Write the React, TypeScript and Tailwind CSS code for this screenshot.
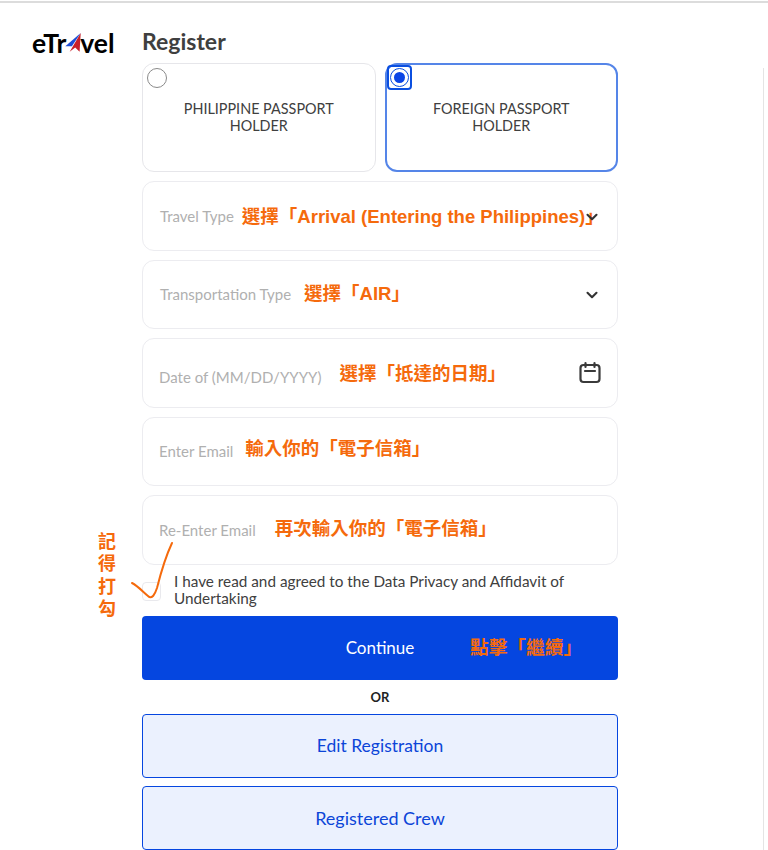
import { ChevronDown } from 'lucide-react';

const noteFont = "font-['Liberation_Sans','Noto_Sans_CJK_TC',sans-serif]";

function Field({ label, note, noteGap, labelClass = '', children }: { label: string; note: string; noteGap: string; labelClass?: string; children?: React.ReactNode }) {
  return (
    <div className="h-[69.5px] border border-[#ececf0] rounded-xl flex items-center pl-4 pr-4 relative">
      <span className={`${labelClass} text-[15px] text-[#b0b0b0] whitespace-nowrap`}>{label}</span>
      <span className={`${noteFont} ${noteGap} text-[18.5px] font-bold text-[#f56a0c] whitespace-nowrap`}>{note}</span>
      {children}
    </div>
  );
}

export default function App() {
  return (
    <div className="w-[768px] h-[850px] overflow-hidden bg-white relative font-['Lato',sans-serif]">
      {/* Top edge + scrollbar line */}
      <div className="h-[3px] border-b-2 border-[#dcdcdc]" />
      <div className="absolute right-[4px] top-[68px] bottom-0 w-px bg-[#e4e4e4]" />

      <div className="flex pl-8 pt-[25px]">
        {/* Logo */}
        <div className="w-[110px] shrink-0 pt-[2px]">
          <div className="flex items-center text-[26.5px] leading-[26px] font-bold text-black">
            <span>eTr</span>
            <svg width="18" height="22" viewBox="0 0 16 20" className="-mx-[2px]">
              <path d="M1 13 L15 1 L7 13 Z" fill="#1d4ed8" />
              <path d="M15 1 L14 18 L10 14 L5 18 Z" fill="#c8202a" />
            </svg>
            <span>vel</span>
          </div>
        </div>

        {/* Main column */}
        <div className="w-[476px]">
          <h1 className="text-[23px] leading-[26px] font-bold text-[#3f3f3f] mb-[9px]">Register</h1>

          <div className="grid grid-cols-2 gap-[9px]">
            <div className="h-[109px] border border-[#e6e6ea] rounded-xl relative flex items-center justify-center text-center text-[14.4px] leading-[17px] text-[#404040]">
              <span className="absolute left-[4px] top-[4px] w-5 h-5 rounded-full border border-[#8a8a8a]" />
              <span className="mt-[-1px]">PHILIPPINE PASSPORT<br />HOLDER</span>
            </div>
            <div className="h-[109px] border-2 border-[#5585e8] rounded-xl relative flex items-center justify-center text-center text-[14.4px] leading-[17px] text-[#404040]">
              <span className="absolute left-0 top-0 w-[25px] h-[25px] rounded-[4px] border-2 border-[#0b4fe0] flex items-center justify-center">
                <span className="w-[19px] h-[19px] rounded-full border border-[#0b4fe0] flex items-center justify-center">
                  <span className="w-[11px] h-[11px] rounded-full bg-[#0b45e6]" />
                </span>
              </span>
              <span className="mt-[-1px]">FOREIGN PASSPORT<br />HOLDER</span>
            </div>
          </div>

          <div className="mt-[9px] flex flex-col gap-[9px]">
            <Field label="Travel Type" note="選擇「Arrival (Entering the Philippines)」" noteGap="ml-[8px] mt-[2px]" labelClass="ml-[1px]">
              <ChevronDown className="absolute right-[16px] top-[26px] w-[18px] h-[18px] text-[#333]" strokeWidth={2.8} />
            </Field>
            <Field label="Transportation Type" note="選擇「AIR」" noteGap="ml-[13px]" labelClass="ml-[1px]">
              <ChevronDown className="absolute right-[16px] top-[25px] w-[18px] h-[18px] text-[#333]" strokeWidth={2.8} />
            </Field>
            <Field label="Date of (MM/DD/YYYY)" note="選擇「抵達的日期」" noteGap="ml-[18px] mt-[3px]" labelClass="mt-[8px]">
              <svg width="24" height="24" viewBox="0 0 24 24" fill="none" stroke="#3a3a3a" strokeWidth="2.2" strokeLinecap="round" className="absolute right-[15px] top-[22px]">
                <rect x="2.5" y="4" width="19" height="17" rx="3" />
                <path d="M7.5 2v4M16.5 2v4M7 10h10" />
              </svg>
            </Field>
            <Field label="Enter Email" note="輸入你的「電子信箱」" noteGap="ml-[12px] mb-[5px]" />
            <Field label="Re-Enter Email" note="再次輸入你的「電子信箱」" noteGap="ml-[19px] mb-[1px]" />
          </div>

          {/* Agreement */}
          <div className="mt-[8px] flex items-center h-[35px]">
            <span className="w-[19px] h-[19px] border border-[#e9e9ed] rounded-[4px] shrink-0 mt-[2px]" />
            <p className="ml-[13px] text-[15.3px] leading-[17px] text-[#404040]">I have read and agreed to the Data Privacy and Affidavit of Undertaking</p>
          </div>

          <button className="mt-[8px] w-full h-[64px] rounded-[4px] bg-[#0546e0] flex items-center justify-center text-[17px] text-white relative">
            Continue
            <span className={`${noteFont} absolute left-[328px] top-[21px] text-[18.7px] leading-[22px] font-bold text-[#f56a0c]`}>點擊「繼續」</span>
          </button>

          <div className="h-[34px] pt-[3px] flex items-center justify-center text-[13px] font-bold text-[#222]">OR</div>

          <div className="flex flex-col gap-[8px]">
            <button className="w-full h-[64px] pt-[2px] rounded-[4px] border border-[#0546e0] bg-[#ebf1fe] text-[17.5px] text-[#0b45d8]">Edit Registration</button>
            <button className="w-full h-[64px] pt-[2px] rounded-[4px] border border-[#0546e0] bg-[#ebf1fe] text-[18px] text-[#0b45d8]">Registered Crew</button>
          </div>
        </div>
      </div>

      {/* Hand-written annotation */}
      <div className={`${noteFont} absolute left-[98px] top-[531px] w-[18px] text-[18px] leading-[22.4px] font-bold text-[#f56a0c]`}>記得打勾</div>
      <svg width="50" height="90" viewBox="0 0 50 90" fill="none" className="absolute left-[128px] top-[538px]">
        <path d="M4 45 C10 48 15 54 20 58 C24 62 27 56 29 50 C32 38 37 20 44 5" stroke="#f56a0c" strokeWidth="2" strokeLinecap="round" />
      </svg>
    </div>
  );
}
